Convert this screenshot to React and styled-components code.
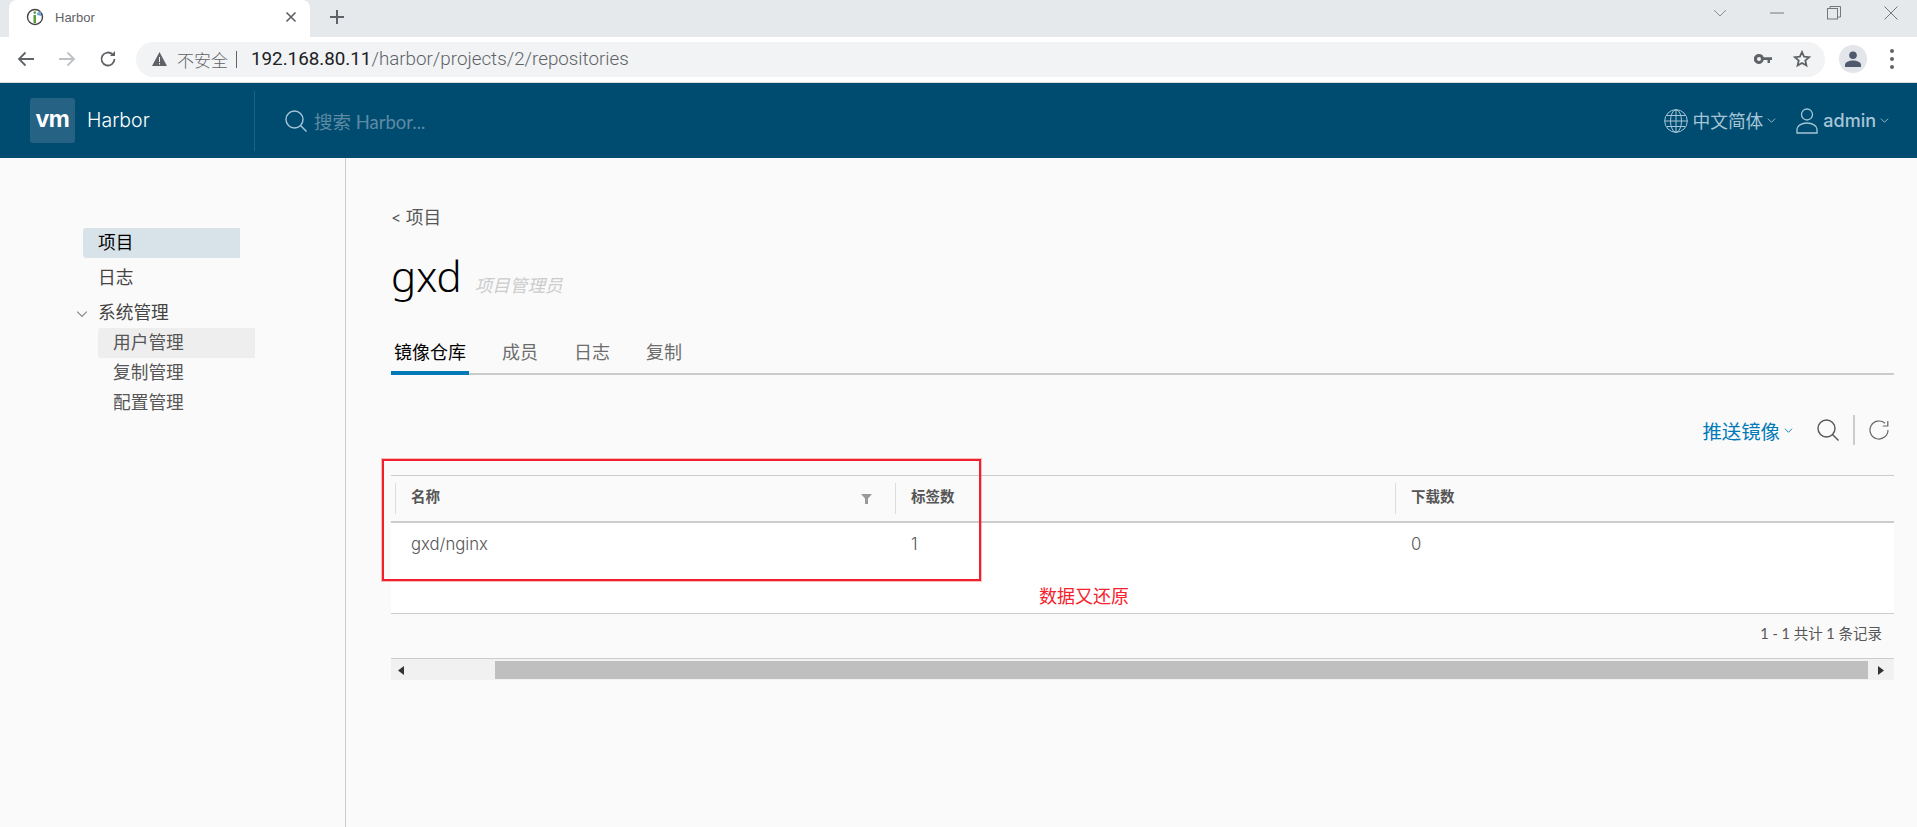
import styled, { createGlobalStyle } from "styled-components";

const CJK = `"Noto Sans CJK SC", "Noto Sans", sans-serif`;
const UI = `Lato, "Noto Sans CJK SC", sans-serif`;
const LATIN = `Inter, "Noto Sans CJK SC", sans-serif`;

const GlobalStyle = createGlobalStyle`
  html, body {
    margin: 0;
    padding: 0;
    height: 100%;
    overflow: hidden;
    background: #fafafa;
  }
  * { box-sizing: border-box; }
`;

const Page = styled.div`
  position: relative;
  width: 1917px;
  height: 827px;
  display: flex;
  flex-direction: column;
  font-family: ${UI};
`;

/* browser chrome */
const TabStrip = styled.div`
  height: 37px;
  background: #e6e9ec;
  display: flex;
  align-items: flex-start;
  padding-left: 9px;
  flex-shrink: 0;
`;

const Tab = styled.div`
  width: 301px;
  height: 37px;
  background: #fff;
  border-radius: 8px 8px 0 0;
  display: flex;
  align-items: center;
  padding: 0 13px 3px 17px;
  font: 13px "Liberation Sans", ${CJK};
  color: #5f6368;
`;

const TabTitle = styled.span`
  margin-left: 11px;
  flex: 1;
`;

const NewTab = styled.div`
  margin: 9px 0 0 19px;
  width: 16px;
  height: 16px;
  display: flex;
`;

const WindowControls = styled.div`
  margin-left: auto;
  display: flex;
  height: 26px;
  align-items: center;
  gap: 43px;
  padding-right: 19px;
`;

const WindowButton = styled.div`
  width: 14px;
  display: flex;
  justify-content: center;
`;

const Toolbar = styled.div`
  height: 46px;
  background: #fff;
  border-bottom: 1px solid #dadce0;
  display: flex;
  align-items: center;
  flex-shrink: 0;
  padding: 0 0 1px 17px;
`;

const NavButton = styled.div`
  width: 41px;
  display: flex;
`;

const Omnibox = styled.div`
  margin-left: -4px;
  width: 1689px;
  height: 35px;
  background: #f1f3f4;
  border-radius: 18px;
  display: flex;
  align-items: center;
  padding: 0 14px 0 16px;
  font: 16px "Liberation Sans", ${CJK};
  color: #5f6368;
`;

const Insecure = styled.span`
  margin-left: 10px;
  font-size: 17px;
  font-weight: 300;
`;

const Pipe = styled.span`
  width: 1px;
  height: 17px;
  background: #5f6368;
  margin: 0 14px 0 8px;
`;

const Url = styled.span`
  font-family: Roboto, sans-serif;
  font-size: 18.8px;
  font-weight: 300;
  color: #5f6368;
  b {
    font-weight: 400;
    color: #202124;
  }
`;

const OmniIcons = styled.div`
  margin-left: auto;
  display: flex;
  align-items: center;
  gap: 21px;
`;

const Avatar = styled.div`
  margin-left: 14px;
  width: 28px;
  height: 28px;
  border-radius: 50%;
  background: #e2e5ea;
  display: flex;
  align-items: center;
  justify-content: center;
`;

const MoreDots = styled.div`
  margin-left: 23px;
  display: flex;
  flex-direction: column;
  gap: 4px;
  i {
    width: 4px;
    height: 4px;
    border-radius: 50%;
    background: #5f6368;
  }
`;

/* harbor header */
const Header = styled.header`
  height: 75px;
  flex-shrink: 0;
  background: #004c70;
  display: flex;
  align-items: center;
  padding: 0 28px 0 30px;
`;

const Logo = styled.div`
  width: 45px;
  height: 45px;
  border-radius: 3px;
  background: #266283;
  color: #fff;
  font: 700 24px/42px "Liberation Sans", sans-serif;
  letter-spacing: -0.5px;
  text-align: center;
`;

const Brand = styled.div`
  margin-left: 12px;
  width: 168px;
  height: 60px;
  line-height: 59px;
  color: #fff;
  font-family: ${LATIN};
  font-weight: 300;
  font-size: 19.5px;
  border-right: 1px solid #1d6287;
`;

const SearchBox = styled.div`
  margin-left: 30px;
  display: flex;
  align-items: center;
  gap: 7px;
  color: #5d8aa3;
  font-size: 18.5px;
`;

const HeaderRight = styled.div`
  margin-left: auto;
  display: flex;
  align-items: center;
  color: #a6c5d6;
  font-size: 17.7px;
`;

const HeaderMenu = styled.div`
  display: flex;
  align-items: center;
  gap: 5px;
  margin-left: ${(p) => p.$gap || 0}px;
  svg:last-child {
    margin-left: -1px;
  }
`;

const MenuLabel = styled.span`
  margin-top: -2px;
`;

const UserName = styled.span`
  font-family: ${LATIN};
  font-weight: 500;
  font-size: 18px;
`;

/* page body */
const Body = styled.div`
  flex: 1;
  display: flex;
  background: #fafafa;
  min-height: 0;
`;

const Sidebar = styled.nav`
  width: 346px;
  flex-shrink: 0;
  border-right: 1px solid #ccc;
  padding: 70px 0 0 83px;
  font-size: 17.7px;
`;

const SideItem = styled.div`
  width: 157px;
  height: 30px;
  line-height: 30px;
  padding-left: 15px;
  margin-bottom: 5px;
  color: ${(p) => (p.$active ? "#000" : "#444")};
  background: ${(p) => (p.$active ? "#d8e3e9" : "transparent")};
  border-radius: 3px 0 0 3px;
`;

const SideGroup = styled(SideItem)`
  position: relative;
  margin-bottom: 0;
  svg {
    position: absolute;
    left: -7px;
    top: 10px;
  }
`;

const SubItem = styled.div`
  width: 157px;
  height: 30px;
  line-height: 30px;
  margin-left: 15px;
  padding-left: 15px;
  color: #565656;
  background: ${(p) => (p.$active ? "#eeeeee" : "transparent")};
  border-radius: 3px 0 0 3px;
`;

const Content = styled.main`
  flex: 1;
  padding: 48px 23px 0 45px;
  min-width: 0;
`;

const BackLink = styled.div`
  height: 24px;
  line-height: 24px;
  font-size: 17.7px;
  color: #565656;
`;

const TitleRow = styled.div`
  margin-top: 21px;
  height: 50px;
  display: flex;
  align-items: baseline;
  gap: 13px;
`;

const Title = styled.h1`
  margin: 0;
  font-weight: 300;
  font-size: 42px;
  line-height: 50px;
  color: #000;
  font-family: "Noto Sans", sans-serif;
`;

const Role = styled.span`
  font-size: 17.6px;
  font-style: italic;
  color: #ccc;
`;

const Tabs = styled.div`
  margin-top: 29px;
  height: 45px;
  display: flex;
  border-bottom: 2px solid #ccc;
`;

const TabLink = styled.div`
  height: 45px;
  line-height: 44px;
  padding: 0 3px;
  margin-right: 30px;
  font-size: 18px;
  color: ${(p) => (p.$active ? "#000" : "#6d6d6d")};
  border-bottom: ${(p) => (p.$active ? "4px solid #0079b8" : "none")};
`;

const ActionBar = styled.div`
  margin-top: 35px;
  height: 40px;
  display: flex;
  align-items: center;
  justify-content: flex-end;
  padding-right: 5px;
`;

const PushButton = styled.div`
  display: flex;
  align-items: center;
  gap: 4px;
  margin-right: 24px;
  color: #0079b8;
  font-size: 19.4px;
`;

const ActionDivider = styled.div`
  width: 2px;
  height: 30px;
  background: #ccc;
  margin: 0 14px 0 14px;
`;

const Table = styled.section`
  margin-top: 25px;
  border-top: 1px solid #ccc;
`;

const HeadRow = styled.div`
  height: 47px;
  padding-left: 4px;
  border-bottom: 2px solid #ccc;
  display: grid;
  grid-template-columns: 500px 500px 1fr;
  align-items: center;
`;

const HeadCell = styled.div`
  height: 31px;
  line-height: 28px;
  margin-top: -1px;
  padding-left: 15px;
  border-left: 1px solid #ddd;
  font-size: 14.5px;
  font-weight: 700;
  color: #555;
  position: relative;
  svg {
    position: absolute;
    right: 23px;
    top: 11px;
  }
`;

const BodyRow = styled.div`
  height: 91px;
  padding-left: 4px;
  background: #fff;
  border-bottom: 1px solid #ccc;
  display: grid;
  grid-template-columns: 500px 500px 1fr;
`;

const BodyCell = styled.div`
  padding: 10px 0 0 16px;
  line-height: 22px;
  font-family: ${LATIN};
  font-size: 16.7px;
  font-weight: 300;
  color: #565656;
`;

const TableFooter = styled.div`
  height: 44px;
  line-height: 40px;
  text-align: right;
  padding-right: 12px;
  font-size: 14.5px;
  color: #565656;
`;

const ScrollBar = styled.div`
  height: 22px;
  border-top: 1px solid #ccc;
  background: #f1f1f1;
  display: flex;
  align-items: center;
  padding-top: 1px;
`;

const ScrollArrow = styled.div`
  width: ${(p) => p.$w}px;
  flex-shrink: 0;
  display: flex;
  justify-content: ${(p) => p.$align || "center"};
  padding-left: ${(p) => p.$inset || 0}px;
`;

const ScrollThumb = styled.div`
  flex: 1;
  height: 18px;
  background: #bfbfbf;
`;

/* red markup drawn on top of the screenshot */
const RedBox = styled.div`
  position: absolute;
  left: 382px;
  top: 459px;
  width: 599px;
  height: 122px;
  border: 2px solid #f0202c;
  box-shadow: 0 0 0 1px rgba(240, 32, 44, 0.3);
`;

const RedNote = styled.div`
  position: absolute;
  left: 1039px;
  top: 583px;
  font-size: 18px;
  line-height: 24px;
  color: #f5222d;
  font-family: ${CJK};
`;

const Chevron = ({ size = 10, color = "currentColor" }) => (
  <svg width={size} height={size} viewBox="0 0 10 10" fill="none" stroke={color} strokeWidth="1">
    <path d="M1 3l4 4 4-4" />
  </svg>
);

const SearchIcon = ({ size = 22, color }) => (
  <svg width={size} height={size} viewBox="0 0 22 22" fill="none" stroke={color} strokeWidth="1.4">
    <circle cx="9.5" cy="9.5" r="8.5" />
    <path d="M15.5 15.5L21.5 21.5" />
  </svg>
);

const Favicon = () => (
  <svg width="18" height="18" viewBox="0 0 18 18" fill="none">
    <circle cx="9" cy="9" r="7.5" stroke="#444" strokeWidth="1.4" />
    <rect x="7.5" y="7" width="2.5" height="8" fill="#5c9a3c" />
    <circle cx="8.8" cy="4.6" r="1.3" fill="#5c9a3c" />
    <path d="M11 5l4-2v5l-4-1z" fill="#6ea8d8" />
  </svg>
);

export default function App() {
  return (
    <Page>
      <GlobalStyle />
      <TabStrip>
        <Tab>
          <Favicon />
          <TabTitle>Harbor</TabTitle>
          <svg width="12" height="12" viewBox="0 0 12 12" stroke="#5f6368" strokeWidth="1.7">
            <path d="M1.5 1.5l9 9M10.5 1.5l-9 9" />
          </svg>
        </Tab>
        <NewTab>
          <svg width="16" height="16" viewBox="0 0 16 16" stroke="#5f6368" strokeWidth="2">
            <path d="M8 1v14M1 8h14" />
          </svg>
        </NewTab>
        <WindowControls>
          <WindowButton>
            <svg width="14" height="8" viewBox="0 0 14 8" fill="none" stroke="#8b9095">
              <path d="M1 1l6 6 6-6" />
            </svg>
          </WindowButton>
          <WindowButton>
            <svg width="14" height="2" viewBox="0 0 14 2" stroke="#777">
              <path d="M0 1h14" />
            </svg>
          </WindowButton>
          <WindowButton>
            <svg width="14" height="14" viewBox="0 0 14 14" fill="none" stroke="#777">
              <rect x="0.5" y="2.5" width="10" height="10.5" />
              <path d="M3 2.5V.5h10.5V11h-3" />
            </svg>
          </WindowButton>
          <WindowButton>
            <svg width="14" height="14" viewBox="0 0 14 14" stroke="#777">
              <path d="M0.5 0.5l13 13M13.5 0.5l-13 13" />
            </svg>
          </WindowButton>
        </WindowControls>
      </TabStrip>

      <Toolbar>
        <NavButton>
          <svg width="18" height="16" viewBox="0 0 18 16" fill="none" stroke="#5f6368" strokeWidth="1.8">
            <path d="M17 8H2M8.5 1.5L2 8l6.5 6.500" />
          </svg>
        </NavButton>
        <NavButton>
          <svg width="18" height="16" viewBox="0 0 18 16" fill="none" stroke="#bdc1c6" strokeWidth="1.8">
            <path d="M1 8h15M9.500 1.500L16 8l-6.500 6.500" />
          </svg>
        </NavButton>
        <NavButton>
          <svg width="18" height="18" viewBox="0 0 18 18" fill="none" stroke="#5f6368" strokeWidth="1.8">
            <path d="M15.500 9a6.500 6.500 0 1 1-1.900-4.600" />
            <path d="M16 1v5h-5z" fill="#5f6368" stroke="none" />
          </svg>
        </NavButton>
        <Omnibox>
          <svg width="15" height="14" viewBox="0 0 15 14">
            <path d="M7.500 0L15 14H0z" fill="#5f6368" />
            <path d="M7 5h1v5H7zM7 11h1v1.500H7z" fill="#f1f3f4" />
          </svg>
          <Insecure>不安全</Insecure>
          <Pipe />
          <Url>
            <b>192.168.80.11</b>/harbor/projects/2/repositories
          </Url>
          <OmniIcons>
            <svg width="18" height="10" viewBox="0 0 18 10" fill="#5f6368">
              <path d="M5 0a5 5 0 0 1 4.700 3.300H18V6h-2v3h-2.500V6H9.700A5 5 0 1 1 5 0zm0 3a2 2 0 1 0 0 4 2 2 0 0 0 0-4z" />
            </svg>
            <svg width="18" height="18" viewBox="0 0 18 18" fill="none" stroke="#5f6368" strokeWidth="1.800">
              <path d="M9 2l2.100 4.700 5 .5-3.800 3.300 1.100 5L9 13l-4.400 2.500 1.100-5L1.900 7.200l5-.5z" />
            </svg>
          </OmniIcons>
        </Omnibox>
        <Avatar>
          <svg width="16" height="16" viewBox="0 0 16 16" fill="#4f5b6d">
            <circle cx="8" cy="4.200" r="3.800" />
            <path d="M0 16v-2c0-3 4-4.500 8-4.500s8 1.500 8 4.500v2z" />
          </svg>
        </Avatar>
        <MoreDots>
          <i />
          <i />
          <i />
        </MoreDots>
      </Toolbar>

      <Header>
        <Logo>vm</Logo>
        <Brand>Harbor</Brand>
        <SearchBox>
          <SearchIcon color="#a6c5d6" />
          <span>搜索 Harbor...</span>
        </SearchBox>
        <HeaderRight>
          <HeaderMenu>
            <svg width="24" height="24" viewBox="0 0 24 24" fill="none" stroke="#a6c5d6" strokeWidth="1">
              <circle cx="12" cy="12" r="11.300" />
              <ellipse cx="12" cy="12" rx="5.500" ry="11.300" />
              <path d="M12 .7v22.600M.7 12h22.600M2.500 6.500h19M2.500 17.500h19" />
            </svg>
            <MenuLabel>中文简体</MenuLabel>
            <Chevron size={9} />
          </HeaderMenu>
          <HeaderMenu $gap={20}>
            <svg width="22" height="26" viewBox="0 0 22 26" fill="none" stroke="#a6c5d6" strokeWidth="1.300">
              <circle cx="11" cy="6.500" r="5.500" />
              <path d="M1 25v-4c0-3 4.500-6 10-6s10 3 10 6v4z" />
            </svg>
            <UserName>admin</UserName>
            <Chevron size={9} />
          </HeaderMenu>
        </HeaderRight>
      </Header>

      <Body>
        <Sidebar>
          <SideItem $active>项目</SideItem>
          <SideItem>日志</SideItem>
          <SideGroup>
            <Chevron size={12} color="#888" />
            系统管理
          </SideGroup>
          <SubItem $active>用户管理</SubItem>
          <SubItem>复制管理</SubItem>
          <SubItem>配置管理</SubItem>
        </Sidebar>
        <Content>
          <BackLink>&lt; 项目</BackLink>
          <TitleRow>
            <Title>gxd</Title>
            <Role>项目管理员</Role>
          </TitleRow>
          <Tabs>
            <TabLink $active>镜像仓库</TabLink>
            <TabLink>成员</TabLink>
            <TabLink>日志</TabLink>
            <TabLink>复制</TabLink>
          </Tabs>
          <ActionBar>
            <PushButton>
              推送镜像
              <Chevron size={9} />
            </PushButton>
            <SearchIcon color="#555" />
            <ActionDivider />
            <svg width="20" height="20" viewBox="0 0 20 20" fill="none" stroke="#666" strokeWidth="1.200">
              <path d="M19 10a9 9 0 1 1-3-6.700" />
              <path d="M18.800 1v5h-5" />
            </svg>
          </ActionBar>
          <Table>
            <HeadRow>
              <HeadCell>
                名称
                <svg width="11" height="10" viewBox="0 0 11 10" fill="#999">
                  <path d="M0 0h11L7 4.500V10H4V4.500z" />
                </svg>
              </HeadCell>
              <HeadCell>标签数</HeadCell>
              <HeadCell>下载数</HeadCell>
            </HeadRow>
            <BodyRow>
              <BodyCell>gxd/nginx</BodyCell>
              <BodyCell>1</BodyCell>
              <BodyCell>0</BodyCell>
            </BodyRow>
            <TableFooter>1 - 1 共计 1 条记录</TableFooter>
            <ScrollBar>
              <ScrollArrow $w={104} $align="flex-start" $inset={7}>
                <svg width="6" height="9" viewBox="0 0 6 9" fill="#333">
                  <path d="M6 0v9L0 4.500z" />
                </svg>
              </ScrollArrow>
              <ScrollThumb />
              <ScrollArrow $w={26}>
                <svg width="6" height="9" viewBox="0 0 6 9" fill="#333">
                  <path d="M0 0v9l6-4.500z" />
                </svg>
              </ScrollArrow>
            </ScrollBar>
          </Table>
        </Content>
      </Body>

      <RedBox />
      <RedNote>数据又还原</RedNote>
    </Page>
  );
}
